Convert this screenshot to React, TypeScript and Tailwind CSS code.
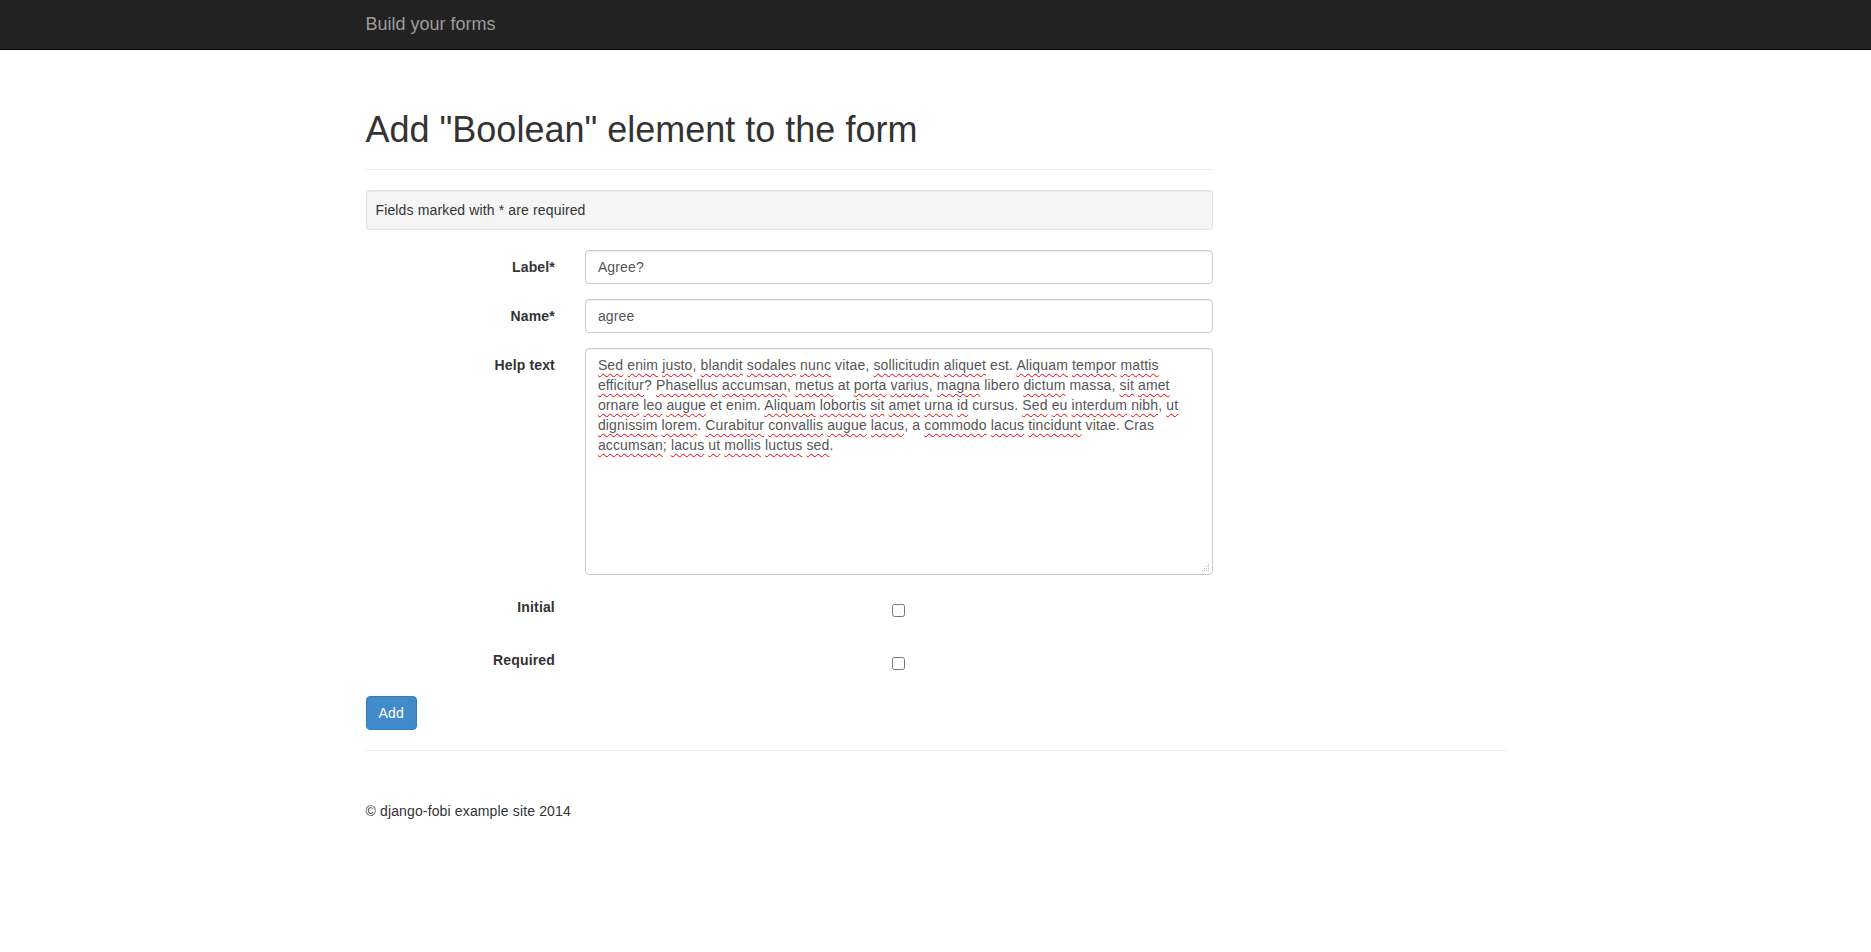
export default function App() {
  const lines: [string, boolean][][] = [
    [["Sed", true], [" ", false], ["enim", true], [" ", false], ["justo", true], [", ", false], ["blandit", true], [" ", false], ["sodales", true], [" ", false], ["nunc", true], [" vitae, ", false], ["sollicitudin", true], [" ", false], ["aliquet", true], [" est. ", false], ["Aliquam", true], [" ", false], ["tempor", true], [" ", false], ["mattis", true]],
    [["efficitur", true], ["? ", false], ["Phasellus", true], [" ", false], ["accumsan", true], [", ", false], ["metus", true], [" at ", false], ["porta", true], [" ", false], ["varius", true], [", ", false], ["magna", true], [" libero ", false], ["dictum", true], [" massa, ", false], ["sit", true], [" ", false], ["amet", true]],
    [["ornare", true], [" ", false], ["leo", true], [" ", false], ["augue", true], [" et enim. ", false], ["Aliquam", true], [" ", false], ["lobortis", true], [" ", false], ["sit", true], [" ", false], ["amet", true], [" ", false], ["urna", true], [" ", false], ["id", true], [" cursus. ", false], ["Sed", true], [" ", false], ["eu", true], [" ", false], ["interdum", true], [" ", false], ["nibh", true], [", ", false], ["ut", true]],
    [["dignissim", true], [" ", false], ["lorem", true], [". ", false], ["Curabitur", true], [" ", false], ["convallis", true], [" ", false], ["augue", true], [" ", false], ["lacus", true], [", a ", false], ["commodo", true], [" ", false], ["lacus", true], [" ", false], ["tincidunt", true], [" vitae. Cras", false]],
    [["accumsan", true], ["; ", false], ["lacus", true], [" ", false], ["ut", true], [" ", false], ["mollis", true], [" ", false], ["luctus", true], [" ", false], ["sed", true], [".", false]],
  ];

  return (
    <div className="min-h-screen bg-white font-['Liberation_Sans',Arial,sans-serif] text-sm leading-5 tracking-[0.14px] text-[#333]">
      {/* Navbar */}
      <nav className="h-[50px] bg-[#222] border-b border-[#080808]">
        <div className="w-[1170px] mx-auto px-[15px]">
          <span className="block h-[49px] leading-[49px] text-lg tracking-normal text-[#9d9d9d]">
            Build your forms
          </span>
        </div>
      </nav>

      <div className="w-[1170px] mx-auto px-[15px] mt-5">
        <div className="w-[847.5px]">
          {/* Page header */}
          <div className="pt-10 pb-[9px] mb-5 border-b border-[#eee]">
            <h1 className="text-[36px] leading-[39.6px] mt-0 mb-[10px] font-normal tracking-normal">
              Add "Boolean" element to the form
            </h1>
          </div>

          <div className="mb-5 p-[9px] bg-[#f5f5f5] border border-[#e3e3e3] rounded-[3px] shadow-[inset_0_1px_1px_rgba(0,0,0,0.05)]">
            Fields marked with * are required
          </div>

          {/* Form */}
          <div className="flex flex-col gap-[15px] -mx-[15px]">
            <Row label="Label*">
              <Input value="Agree?" />
            </Row>
            <Row label="Name*">
              <Input value="agree" />
            </Row>
            <Row label="Help text">
              <div className="relative h-[227px] px-3 py-[6px] bg-white border border-[#ccc] rounded shadow-[inset_0_1px_1px_rgba(0,0,0,0.075)] text-[#555]">
                {lines.map((line, i) => (
                  <div key={i} className="whitespace-pre">
                    {line.map(([t, bad], j) =>
                      bad ? (
                        <span
                          key={j}
                          className="underline decoration-wavy decoration-[#e00] decoration-1 underline-offset-[3px]"
                        >
                          {t}
                        </span>
                      ) : (
                        <span key={j}>{t}</span>
                      )
                    )}
                  </div>
                ))}
                <svg
                  className="absolute right-[2px] bottom-[2px]"
                  width="9"
                  height="9"
                  viewBox="0 0 9 9"
                >
                  <g fill="#bbb">
                    <rect x="7" y="1" width="1" height="1" />
                    <rect x="5" y="3" width="1" height="1" />
                    <rect x="7" y="3" width="1" height="1" />
                    <rect x="3" y="5" width="1" height="1" />
                    <rect x="5" y="5" width="1" height="1" />
                    <rect x="7" y="5" width="1" height="1" />
                    <rect x="1" y="7" width="1" height="1" />
                    <rect x="3" y="7" width="1" height="1" />
                    <rect x="5" y="7" width="1" height="1" />
                    <rect x="7" y="7" width="1" height="1" />
                  </g>
                </svg>
              </div>
            </Row>
            <Row label="Initial">
              <Check />
            </Row>
            <Row label="Required">
              <Check />
            </Row>
          </div>

          <button className="mt-[15px] h-[34px] px-3 bg-[#428bca] border border-[#357ebd] rounded text-white">
            Add
          </button>
        </div>

        <hr className="mt-5 border-0 border-t border-[#eee]" />

        <footer className="pt-[50px]">
          <p>© django-fobi example site 2014</p>
        </footer>
      </div>
    </div>
  );
}

function Row({ label, children }: { label: string; children: React.ReactNode }) {
  return (
    <div className="flex">
      <label className="w-[219.4px] shrink-0 px-[15px] pt-[7px] text-right font-bold">
        {label}
      </label>
      <div className="flex-1 px-[15px]">{children}</div>
    </div>
  );
}

function Input({ value }: { value: string }) {
  return (
    <div className="h-[34px] px-3 py-[6px] bg-white border border-[#ccc] rounded shadow-[inset_0_1px_1px_rgba(0,0,0,0.075)] text-[#555]">
      {value}
    </div>
  );
}

function Check() {
  return (
    <div className="mt-1 h-[34px] flex items-center justify-center">
      <input type="checkbox" readOnly className="w-[13px] h-[13px] m-0" />
    </div>
  );
}
